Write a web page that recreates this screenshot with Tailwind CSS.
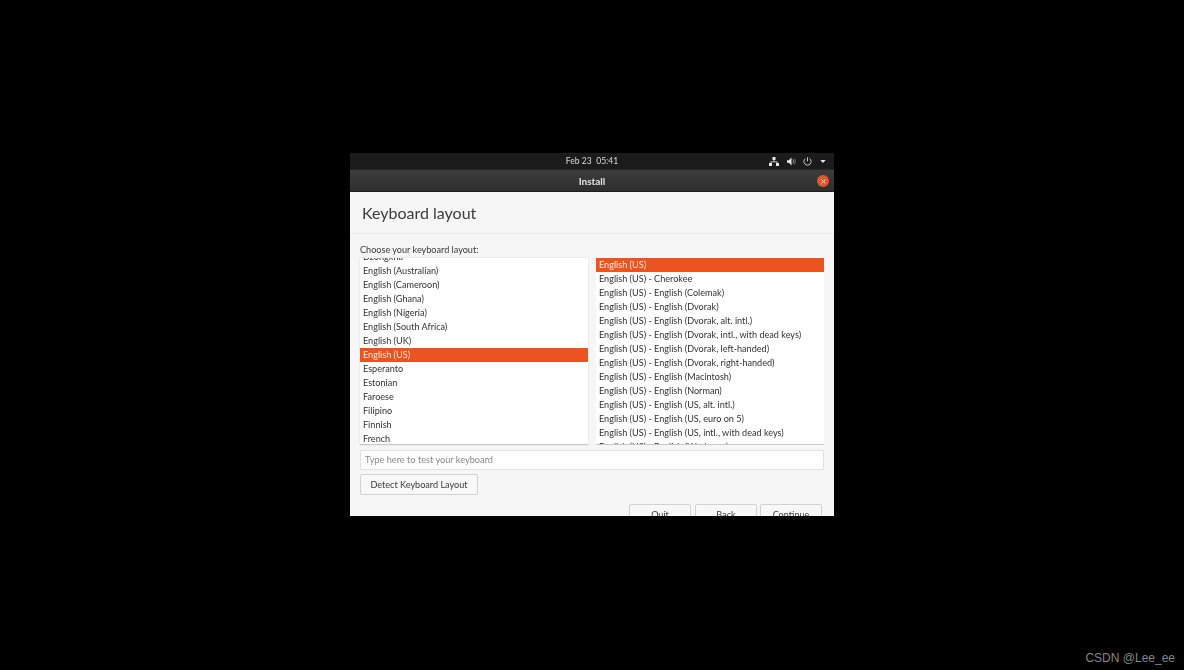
<!doctype html>
<html>
<head>
<meta charset="utf-8">
<script src="https://cdn.jsdelivr.net/npm/@tailwindcss/browser@4"></script>
</head>
<body class="bg-black">
<div class="relative h-[670px] w-[1184px] overflow-hidden bg-black pt-[153px] font-['Lato',sans-serif]">
  <div class="mx-auto flex h-[363px] w-[484px] flex-col overflow-hidden bg-[#f6f6f6] blur-[0.5px]">
    <div class="relative flex h-[16px] shrink-0 items-center justify-center bg-[#1b1b1b] pt-px text-[8.6px] text-[#d8d8d8]">
      <span>Feb 23&nbsp;&nbsp;05:41</span>
      <div class="absolute right-[8px] top-0 flex h-full items-center text-white">
        <svg width="10" height="9" viewBox="0 0 10 9" fill="#e8e8e8" class="mr-[8px]"><rect x="3.5" y="0" width="3" height="3"/><rect x="0" y="6" width="3" height="3"/><rect x="7" y="6" width="3" height="3"/><path d="M4.6 3h.8v1.5H8.5V6h-.8v-.8H2.3V6h-.8V4.5h3.1z"/></svg>
        <svg width="9" height="9" viewBox="0 0 10 9" fill="#e8e8e8" class="mr-[7px]"><path d="M0 3h2l3-3v9L2 6H0z"/><path d="M6.3 2.5c1.2 1 1.2 3 0 4" fill="none" stroke="#bbb" stroke-width="1"/><path d="M7.8 1.3c1.9 1.7 1.9 4.7 0 6.4" fill="none" stroke="#888" stroke-width="1"/></svg>
        <svg width="9" height="9" viewBox="0 0 9 9" fill="none" stroke="#c8c8c8" stroke-width="1" class="mr-[8px]"><path d="M2.3 1.7a3.6 3.6 0 1 0 4.4 0"/><path d="M4.5 0.3v4"/></svg>
        <svg width="6" height="3" viewBox="0 0 7 4" fill="#e8e8e8"><path d="M0 0h7L3.5 4z"/></svg>
      </div>
    </div>
    <div class="relative flex h-[23px] shrink-0 items-center justify-center border-t border-b border-t-[#262626] border-b-[#1d1d1d] bg-gradient-to-b from-[#3c3c3c] to-[#2f2f2f] pt-px text-[10px] font-bold text-[#e4e4e4]">
      <span>Install</span>
      <div class="absolute right-[5px] top-[5px] flex h-[12px] w-[12px] items-center justify-center rounded-full bg-[#e2582a]">
        <svg width="5" height="5" viewBox="0 0 5 5" stroke="#f6d8cc" stroke-width="1"><path d="M.5.5l4 4M4.5.5l-4 4"/></svg>
      </div>
    </div>
    <div class="flex h-[42px] shrink-0 items-center border-b border-[#e8e8e8] pl-[12px] pt-px text-[16px] text-[#3d3d3d]">Keyboard layout</div>
    <div class="flex min-h-0 flex-1 flex-col px-[10px]">
      <div class="mt-[7px] h-[17px] shrink-0 text-[9.1px] leading-[17px] text-[#3a3a3a]">Choose your keyboard layout:</div>
      <div class="flex shrink-0 gap-[8px]">
        <div class="h-[187px] w-[228px] overflow-hidden border-b border-[#c8c8c8] bg-white text-[9.1px] leading-[14px] text-[#333] shadow-[0_0_1px_#bbb]">
          <div class="-mt-[8px]">
            <div class="h-[14px] pl-[3px]">Dzongkha</div>
            <div class="h-[14px] pl-[3px]">English (Australian)</div>
            <div class="h-[14px] pl-[3px]">English (Cameroon)</div>
            <div class="h-[14px] pl-[3px]">English (Ghana)</div>
            <div class="h-[14px] pl-[3px]">English (Nigeria)</div>
            <div class="h-[14px] pl-[3px]">English (South Africa)</div>
            <div class="h-[14px] pl-[3px]">English (UK)</div>
            <div class="h-[14px] bg-[#ea5420] pl-[3px] text-[#fde4da]">English (US)</div>
            <div class="h-[14px] pl-[3px]">Esperanto</div>
            <div class="h-[14px] pl-[3px]">Estonian</div>
            <div class="h-[14px] pl-[3px]">Faroese</div>
            <div class="h-[14px] pl-[3px]">Filipino</div>
            <div class="h-[14px] pl-[3px]">Finnish</div>
            <div class="h-[14px] pl-[3px]">French</div>
          </div>
        </div>
        <div class="h-[187px] w-[228px] overflow-hidden border-b border-[#c8c8c8] bg-white text-[9.1px] leading-[14px] text-[#333]">
          <div class="h-[14px] bg-[#ea5420] pl-[3px] text-[#fde4da]">English (US)</div>
          <div class="h-[14px] pl-[3px]">English (US) - Cherokee</div>
          <div class="h-[14px] pl-[3px]">English (US) - English (Colemak)</div>
          <div class="h-[14px] pl-[3px]">English (US) - English (Dvorak)</div>
          <div class="h-[14px] pl-[3px]">English (US) - English (Dvorak, alt. intl.)</div>
          <div class="h-[14px] pl-[3px]">English (US) - English (Dvorak, intl., with dead keys)</div>
          <div class="h-[14px] pl-[3px]">English (US) - English (Dvorak, left-handed)</div>
          <div class="h-[14px] pl-[3px]">English (US) - English (Dvorak, right-handed)</div>
          <div class="h-[14px] pl-[3px]">English (US) - English (Macintosh)</div>
          <div class="h-[14px] pl-[3px]">English (US) - English (Norman)</div>
          <div class="h-[14px] pl-[3px]">English (US) - English (US, alt. intl.)</div>
          <div class="h-[14px] pl-[3px]">English (US) - English (US, euro on 5)</div>
          <div class="h-[14px] pl-[3px]">English (US) - English (US, intl., with dead keys)</div>
          <div class="h-[14px] pl-[3px]">English (US) - English (Workman)</div>
        </div>
      </div>
      <div class="mt-[5px] flex h-[20px] w-[464px] shrink-0 items-center border border-[#e2e2e2] bg-white pl-[4px] text-[9.2px] text-[#8a8a8a]">Type here to test your keyboard</div>
      <div class="mt-[4px] flex h-[21px] w-[118px] shrink-0 items-center justify-center rounded-[2px] border border-[#d2d2d2] bg-[#f8f8f8] text-[9.1px] text-[#3a3a3a]">Detect Keyboard Layout</div>
      <div class="mt-[9px] flex h-[24px] shrink-0 justify-end pr-[2px]">
        <div class="mr-[4px] flex h-[21px] w-[62px] shrink-0 items-center justify-center rounded-[2px] border border-[#d2d2d2] bg-[#f8f8f8] pt-[1px] text-[9.1px] text-[#3a3a3a]">Quit</div>
        <div class="mr-[3px] flex h-[21px] w-[62px] shrink-0 items-center justify-center rounded-[2px] border border-[#d2d2d2] bg-[#f8f8f8] pt-[1px] text-[9.1px] text-[#3a3a3a]">Back</div>
        <div class="flex h-[21px] w-[62px] shrink-0 items-center justify-center rounded-[2px] border border-[#d2d2d2] bg-[#f8f8f8] pt-[1px] text-[9.1px] text-[#3a3a3a]">Continue</div>
      </div>
    </div>
  </div>
  <div class="absolute right-[9px] top-[650px] font-['Liberation_Sans',sans-serif] text-[12px] leading-[16px] text-[#858585]">CSDN @Lee_ee</div>
</div>
</body>
</html>
